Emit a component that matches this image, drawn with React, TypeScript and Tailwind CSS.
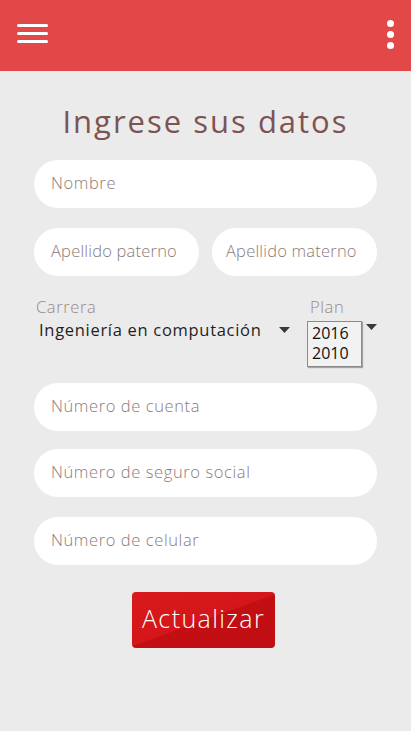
import React from 'react';

const font = { fontFamily: '"Open Sans", "Noto Sans", sans-serif' };

const Field: React.FC<{ label: string; className?: string; tight?: boolean }> = ({ label, className = '', tight }) => (
  <div className={`h-[48px] shrink-0 rounded-full bg-white flex items-center px-[17px] ${className}`}>
    <span className={`text-[16.5px] font-light text-[#8b7b7b] whitespace-nowrap -mt-[2px] ${tight ? 'tracking-[0.2px]' : 'tracking-[0.6px]'}`}>{label}</span>
  </div>
);

const Caret: React.FC = () => (
  <svg width="11" height="6" viewBox="0 0 11 6" className="block shrink-0">
    <path d="M0 0h11L5.5 6z" fill="#3a3a3a" />
  </svg>
);

const App: React.FC = () => {
  return (
    <div className="w-[411px] h-[731px] bg-[#ebebeb] flex flex-col overflow-hidden" style={font}>
      {/* toolbar */}
      <div className="h-[71px] bg-[#e24848] flex items-center justify-between pl-[17px] pr-[17px] shrink-0">
        <div className="flex flex-col gap-[5px] -mt-[4px]">
          <div className="w-[31px] h-[3px] rounded-full bg-white" />
          <div className="w-[31px] h-[3px] rounded-full bg-white" />
          <div className="w-[31px] h-[3px] rounded-full bg-white" />
        </div>
        <div className="flex flex-col gap-[4px] -mt-[3px]">
          <div className="w-[7px] h-[7px] rounded-full bg-white" />
          <div className="w-[7px] h-[7px] rounded-full bg-white" />
          <div className="w-[7px] h-[7px] rounded-full bg-white" />
        </div>
      </div>

      <div className="flex flex-col px-[34px] pt-[29px]">
        <h1 className="text-center text-[31px] leading-[42px] text-[#7d5353] tracking-[2px]">Ingrese sus datos</h1>

        <Field label="Nombre" className="mt-[18px]" />

        <div className="flex gap-[13px] mt-[20px]">
          <Field label="Apellido paterno" className="w-[165px] overflow-hidden" tight />
          <Field label="Apellido materno" className="w-[165px] overflow-hidden !px-[14px]" tight />
        </div>

        <div className="flex mt-[20px] h-[71px]">
          <div className="flex flex-col w-[274px]">
            <span className="text-[16.5px] leading-[22px] font-light text-[#9a8888] tracking-[0.6px] pl-[2px]">Carrera</span>
            <div className="flex items-center mt-[1px] pl-[5px]">
              <span className="text-[16.5px] leading-[22px] text-[#1f1f1f] tracking-[0.7px] whitespace-nowrap">Ingeniería en computación</span>
              <span className="ml-[17px]"><Caret /></span>
            </div>
          </div>
          <div className="flex flex-col">
            <span className="text-[16.5px] leading-[22px] font-light text-[#9a8888] tracking-[0.6px] pl-[3px]">Plan</span>
            <div className="flex items-start mt-[3px]">
              <div className="w-[55px] h-[46px] border border-[#8a8a8a] bg-[#f2f2f2] shadow-[1px_1px_1px_rgba(0,0,0,0.3)] flex flex-col pl-[4px] pt-[1px] text-[16px] leading-[20px] text-[#111]">
                <span>2016</span>
                <span>2010</span>
              </div>
              <span className="ml-[4px] mt-[3px]"><Caret /></span>
            </div>
          </div>
        </div>

        <Field label="Número de cuenta" className="mt-[16px]" />
        <Field label="Número de seguro social" className="mt-[18px]" />
        <Field label="Número de celular" className="mt-[20px]" />

        <div className="flex mt-[27px] pl-[98px]">
          <button className="w-[143px] h-[56px] rounded-[4px] bg-[linear-gradient(160deg,#d91a1c_0%,#d4161a_50%,#c30f12_50.5%,#c00e12_100%)] text-white text-[25px] font-light tracking-[1.4px] flex items-center justify-center pb-[2px]">
            Actualizar
          </button>
        </div>
      </div>
    </div>
  );
};

export default App;
